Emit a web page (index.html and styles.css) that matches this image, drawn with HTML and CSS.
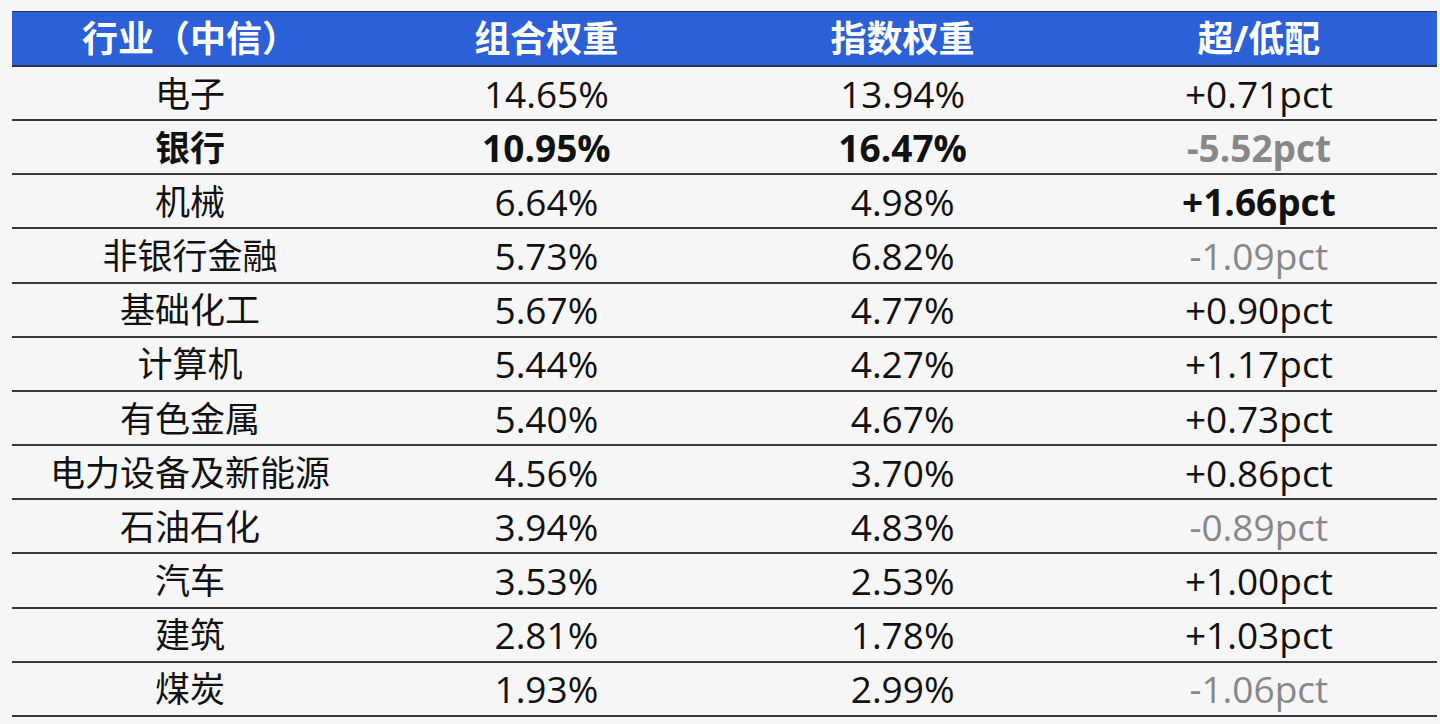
FILE: index.html
```html
<!DOCTYPE html>
<html lang="zh-CN">
<head>
<meta charset="utf-8">
<title>行业权重</title>
<link rel="stylesheet" href="styles.css">
</head>
<body>
<div class="table">
  <div class="row head">
    <div class="cell">行业（中信）</div>
    <div class="cell">组合权重</div>
    <div class="cell">指数权重</div>
    <div class="cell">超/低配</div>
  </div>
  <div class="row"><div class="cell">电子</div><div class="cell">14.65%</div><div class="cell">13.94%</div><div class="cell">+0.71pct</div></div>
  <div class="row bold"><div class="cell">银行</div><div class="cell">10.95%</div><div class="cell">16.47%</div><div class="cell neg">-5.52pct</div></div>
  <div class="row"><div class="cell">机械</div><div class="cell">6.64%</div><div class="cell">4.98%</div><div class="cell strong">+1.66pct</div></div>
  <div class="row"><div class="cell">非银行金融</div><div class="cell">5.73%</div><div class="cell">6.82%</div><div class="cell neg">-1.09pct</div></div>
  <div class="row"><div class="cell">基础化工</div><div class="cell">5.67%</div><div class="cell">4.77%</div><div class="cell">+0.90pct</div></div>
  <div class="row"><div class="cell">计算机</div><div class="cell">5.44%</div><div class="cell">4.27%</div><div class="cell">+1.17pct</div></div>
  <div class="row"><div class="cell">有色金属</div><div class="cell">5.40%</div><div class="cell">4.67%</div><div class="cell">+0.73pct</div></div>
  <div class="row"><div class="cell">电力设备及新能源</div><div class="cell">4.56%</div><div class="cell">3.70%</div><div class="cell">+0.86pct</div></div>
  <div class="row"><div class="cell">石油石化</div><div class="cell">3.94%</div><div class="cell">4.83%</div><div class="cell neg">-0.89pct</div></div>
  <div class="row"><div class="cell">汽车</div><div class="cell">3.53%</div><div class="cell">2.53%</div><div class="cell">+1.00pct</div></div>
  <div class="row"><div class="cell">建筑</div><div class="cell">2.81%</div><div class="cell">1.78%</div><div class="cell">+1.03pct</div></div>
  <div class="row"><div class="cell">煤炭</div><div class="cell">1.93%</div><div class="cell">2.99%</div><div class="cell neg">-1.06pct</div></div>
</div>
</body>
</html>
```

FILE: styles.css
```css
html, body {
  margin: 0;
  padding: 0;
  background: #f6f6f6;
}
body {
  font-family: "Open Sans", "Noto Sans CJK SC", sans-serif;
  color: #111;
  padding: 11px 3px 0 12px;
}
.table {
  width: 1425px;
  display: flex;
  flex-direction: column;
}
.row {
  display: grid;
  grid-template-columns: repeat(4, 1fr);
  height: 54.17px;
  box-sizing: border-box;
  border-bottom: 2px solid #3a3a3a;
}
.row.head {
  height: 56px;
  background: #2b60d8;
  color: #fff;
  font-weight: 700;
  border-top: 1px solid #2a3550;
  border-bottom: 2px solid #2a3550;
}
.cell {
  display: flex;
  align-items: center;
  justify-content: center;
  font-size: 37px;
  line-height: 1;
  white-space: nowrap;
}
.cell:first-child {
  font-size: 35px;
}
.head .cell {
  font-size: 36px;
}
.bold .cell, .strong {
  font-weight: 700;
}
.neg {
  color: #888;
}
```
